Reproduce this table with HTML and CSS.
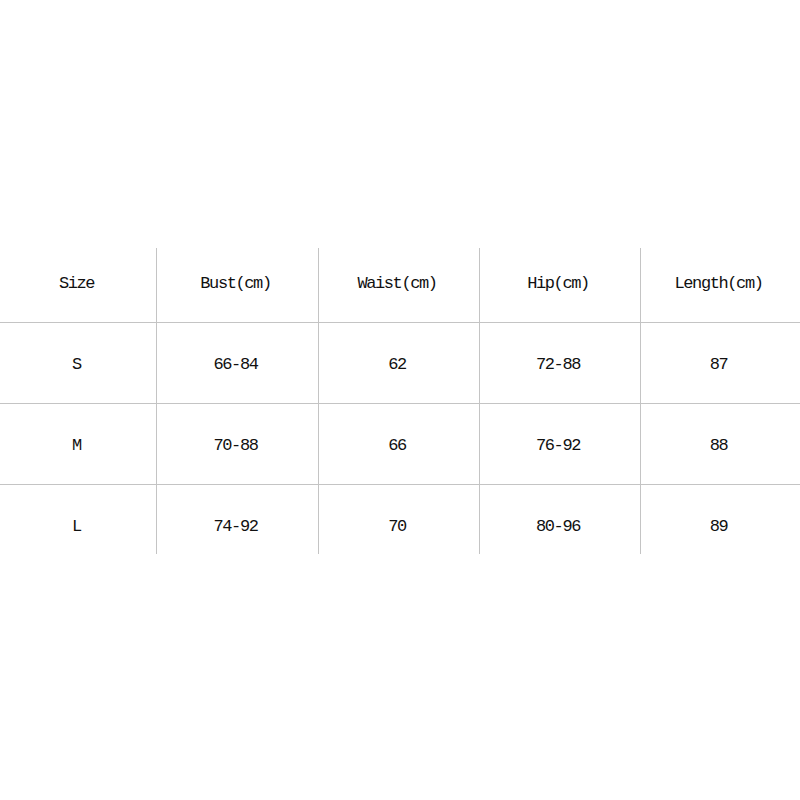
FILE: index.html
```html
<!DOCTYPE html>
<html>
<head>
<meta charset="utf-8">
<link rel="stylesheet" href="styles.css">
</head>
<body>
<div class="size-table">
  <div class="row head">
    <div class="cell">Size</div>
    <div class="cell">Bust(cm)</div>
    <div class="cell">Waist(cm)</div>
    <div class="cell">Hip(cm)</div>
    <div class="cell">Length(cm)</div>
  </div>
  <div class="row">
    <div class="cell">S</div>
    <div class="cell">66-84</div>
    <div class="cell">62</div>
    <div class="cell">72-88</div>
    <div class="cell">87</div>
  </div>
  <div class="row">
    <div class="cell">M</div>
    <div class="cell">70-88</div>
    <div class="cell">66</div>
    <div class="cell">76-92</div>
    <div class="cell">88</div>
  </div>
  <div class="row last">
    <div class="cell">L</div>
    <div class="cell">74-92</div>
    <div class="cell">70</div>
    <div class="cell">80-96</div>
    <div class="cell">89</div>
  </div>
</div>
</body>
</html>
```
FILE: styles.css
```css
html, body {
  margin: 0;
  padding: 0;
  background: #ffffff;
}
body {
  width: 800px;
  height: 800px;
  padding-top: 242px;
  box-sizing: border-box;
}
.size-table {
  display: flex;
  flex-direction: column;
}
.row {
  display: grid;
  grid-template-columns: 156px 162px 161px 161px 160px;
  height: 80px;
}
.row + .row {
  border-top: 1px solid #c4c4c4;
}
.cell {
  display: flex;
  align-items: center;
  justify-content: center;
  font-family: "Liberation Mono", "DejaVu Sans Mono", monospace;
  font-size: 17px;
  letter-spacing: -1.4px;
  color: #111111;
  padding-top: 3px;
  padding-right: 3px;
}
.cell + .cell {
  background: linear-gradient(#c4c4c4, #c4c4c4) left top / 1px 100% no-repeat;
}
.head .cell + .cell {
  background: linear-gradient(#c4c4c4, #c4c4c4) left 6px / 1px calc(100% - 6px) no-repeat;
}
.last .cell + .cell {
  background: linear-gradient(#c4c4c4, #c4c4c4) left top / 1px calc(100% - 11px) no-repeat;
}
```
